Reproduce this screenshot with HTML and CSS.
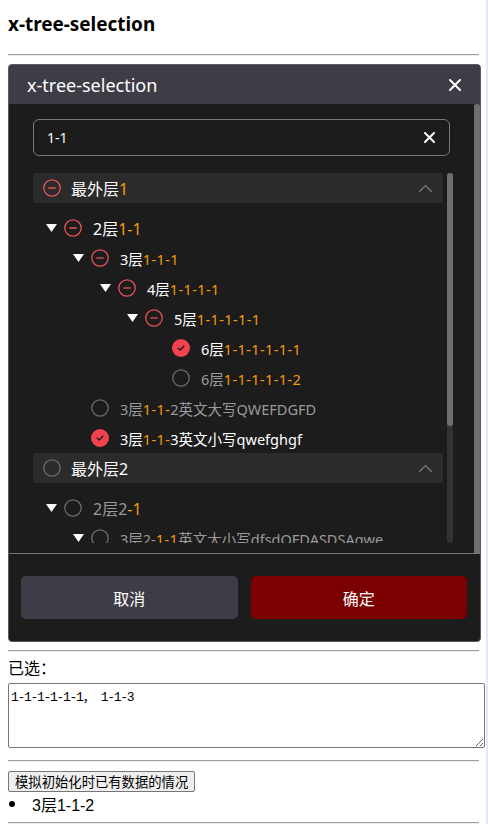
FILE: index.html
```html
<!DOCTYPE html>
<html lang="zh">
<head>
<meta charset="utf-8">
<title>x-tree-selection</title>
<link rel="stylesheet" href="styles.css">
</head>
<body>
<div class="page">
  <h3 class="page-title">x-tree-selection</h3>
  <hr class="rule rule-a">

  <div class="modal">
    <div class="modal-head">
      <span class="modal-title">x-tree-selection</span>
      <svg class="close" width="12" height="12" viewBox="0 0 12 12"><path d="M1 1L11 11M11 1L1 11" stroke="#fff" stroke-width="2" stroke-linecap="round"/></svg>
    </div>
    <div class="modal-body">
      <div class="modal-content">
        <div class="search">
          <span class="search-text">1-1</span>
          <svg class="search-x" width="11" height="11" viewBox="0 0 11 11"><path d="M1 1L10 10M10 1L1 10" stroke="#fff" stroke-width="2" stroke-linecap="round"/></svg>
        </div>
        <div class="tree-wrap">
          <div class="tree">
            <div class="row top">
              <svg class="ico" viewBox="0 0 18 18"><circle cx="9" cy="9" r="8.2" fill="none" stroke="#e5525b" stroke-width="1.3"/><path d="M5.3 9H12.7" stroke="#e5525b" stroke-width="1.3"/></svg>
              <span class="label top-label">最外层<span class="hl">1</span></span>
              <svg class="chev" width="15" height="9" viewBox="0 0 15 9"><path d="M1 8L7.5 1.5L14 8" fill="none" stroke="#707070" stroke-width="1.5"/></svg>
            </div>
            <div class="children">
              <div class="row node d1">
                <svg class="caret" viewBox="0 0 11 8"><path d="M0 0H11L5.5 8Z" fill="#fff"/></svg>
                <svg class="ico" viewBox="0 0 18 18"><circle cx="9" cy="9" r="8.2" fill="none" stroke="#e5525b" stroke-width="1.3"/><path d="M5.3 9H12.7" stroke="#e5525b" stroke-width="1.3"/></svg>
                <span class="label big">2层<span class="hl">1-1</span></span>
              </div>
              <div class="row node d2">
                <svg class="caret" viewBox="0 0 11 8"><path d="M0 0H11L5.5 8Z" fill="#fff"/></svg>
                <svg class="ico" viewBox="0 0 18 18"><circle cx="9" cy="9" r="8.2" fill="none" stroke="#e5525b" stroke-width="1.3"/><path d="M5.3 9H12.7" stroke="#e5525b" stroke-width="1.3"/></svg>
                <span class="label">3层<span class="hl">1-1-1</span></span>
              </div>
              <div class="row node d3">
                <svg class="caret" viewBox="0 0 11 8"><path d="M0 0H11L5.5 8Z" fill="#fff"/></svg>
                <svg class="ico" viewBox="0 0 18 18"><circle cx="9" cy="9" r="8.2" fill="none" stroke="#e5525b" stroke-width="1.3"/><path d="M5.3 9H12.7" stroke="#e5525b" stroke-width="1.3"/></svg>
                <span class="label">4层<span class="hl">1-1-1-1</span></span>
              </div>
              <div class="row node d4">
                <svg class="caret" viewBox="0 0 11 8"><path d="M0 0H11L5.5 8Z" fill="#fff"/></svg>
                <svg class="ico" viewBox="0 0 18 18"><circle cx="9" cy="9" r="8.2" fill="none" stroke="#e5525b" stroke-width="1.3"/><path d="M5.3 9H12.7" stroke="#e5525b" stroke-width="1.3"/></svg>
                <span class="label">5层<span class="hl">1-1-1-1-1</span></span>
              </div>
              <div class="row node d5">
                <svg class="caret hidden" viewBox="0 0 11 8"><path d="M0 0H11L5.5 8Z" fill="#fff"/></svg>
                <svg class="ico" viewBox="0 0 18 18"><circle cx="9" cy="9" r="9" fill="#f0434f"/><path d="M6.2 9.2L8.2 11L11.8 7.2" fill="none" stroke="#1c1c1c" stroke-width="1.4" stroke-linecap="round" stroke-linejoin="round"/></svg>
                <span class="label">6层<span class="hl">1-1-1-1-1-1</span></span>
              </div>
              <div class="row node d5">
                <svg class="caret hidden" viewBox="0 0 11 8"><path d="M0 0H11L5.5 8Z" fill="#fff"/></svg>
                <svg class="ico" viewBox="0 0 18 18"><circle cx="9" cy="9" r="8.2" fill="none" stroke="#6b6b6b" stroke-width="1.3"/></svg>
                <span class="label muted">6层<span class="hl">1-1-1-1-1-2</span></span>
              </div>
              <div class="row node d2">
                <svg class="caret hidden" viewBox="0 0 11 8"><path d="M0 0H11L5.5 8Z" fill="#fff"/></svg>
                <svg class="ico" viewBox="0 0 18 18"><circle cx="9" cy="9" r="8.2" fill="none" stroke="#6b6b6b" stroke-width="1.3"/></svg>
                <span class="label muted">3层<span class="hl">1-1-</span>2英文大写QWEFDGFD</span>
              </div>
              <div class="row node d2">
                <svg class="caret hidden" viewBox="0 0 11 8"><path d="M0 0H11L5.5 8Z" fill="#fff"/></svg>
                <svg class="ico" viewBox="0 0 18 18"><circle cx="9" cy="9" r="9" fill="#f0434f"/><path d="M6.2 9.2L8.2 11L11.8 7.2" fill="none" stroke="#1c1c1c" stroke-width="1.4" stroke-linecap="round" stroke-linejoin="round"/></svg>
                <span class="label">3层<span class="hl">1-1-</span>3英文小写qwefghgf</span>
              </div>
            </div>

            <div class="row top">
              <svg class="ico" viewBox="0 0 18 18"><circle cx="9" cy="9" r="8.2" fill="none" stroke="#6b6b6b" stroke-width="1.3"/></svg>
              <span class="label top-label">最外层2</span>
              <svg class="chev" width="15" height="9" viewBox="0 0 15 9"><path d="M1 8L7.5 1.5L14 8" fill="none" stroke="#707070" stroke-width="1.5"/></svg>
            </div>
            <div class="children">
              <div class="row node d1">
                <svg class="caret" viewBox="0 0 11 8"><path d="M0 0H11L5.5 8Z" fill="#fff"/></svg>
                <svg class="ico" viewBox="0 0 18 18"><circle cx="9" cy="9" r="8.2" fill="none" stroke="#6b6b6b" stroke-width="1.3"/></svg>
                <span class="label big muted">2层2<span class="hl">-1</span></span>
              </div>
              <div class="row node d2">
                <svg class="caret" viewBox="0 0 11 8"><path d="M0 0H11L5.5 8Z" fill="#fff"/></svg>
                <svg class="ico" viewBox="0 0 18 18"><circle cx="9" cy="9" r="8.2" fill="none" stroke="#6b6b6b" stroke-width="1.3"/></svg>
                <span class="label muted">3层2-<span class="hl">1-1</span>英文大小写dfsdQFDASDSAqwe</span>
              </div>
            </div>
          </div>
          <div class="vbar"><div class="vthumb"></div></div>
        </div>
      </div>
      <div class="outer-bar"></div>
    </div>
    <div class="modal-foot">
      <button class="btn btn-cancel">取消</button>
      <button class="btn btn-ok">确定</button>
    </div>
  </div>

  <hr class="rule rule-b">
  <div class="picked-label">已选：</div>
  <textarea class="picked">1-1-1-1-1-1， 1-1-3</textarea>
  <hr class="rule rule-c">
  <button class="sim">模拟初始化时已有数据的情况</button>
  <ul class="list"><li class="list-item"><span class="dot"></span>3层1-1-2</li></ul>
  <hr class="rule rule-d">
</div>
</body>
</html>
```

FILE: styles.css
```css
html {
  background: #fff;
  box-shadow: inset -2px 0 0 #e3e8f4;
}
body {
  margin: 0;
  font-family: "Liberation Sans", "Noto Sans CJK SC", sans-serif;
  color: #000;
}
.page {
  padding: 0 8px;
}
.page-title {
  margin: 12px 0 18px;
  font-family: "Noto Sans", "Noto Sans CJK SC", sans-serif;
  font-size: 18.9px;
  font-weight: bold;
  line-height: 24px;
}
.rule {
  margin: 0;
  height: 0;
  border: 0;
  border-top: 1px solid #a0a0a0;
  border-bottom: 1px solid #ececec;
}
.rule-a { width: 471px; }
.rule-b { width: 471px; margin-top: 8px; }
.rule-c { width: 471px; margin-top: 12px; }
.rule-d { width: 471px; margin-top: 7px; }

/* modal */
.modal {
  margin-top: 8px;
  width: 473px;
  box-sizing: border-box;
  border: 1px solid #5c5c5c;
  border-radius: 4px;
  overflow: hidden;
  background: #1c1c1c;
  font-family: "Noto Sans", "Noto Sans CJK SC", sans-serif;
}
.modal-head {
  height: 39px;
  background: #3e3d46;
  display: flex;
  align-items: center;
  justify-content: space-between;
  padding: 0 19px 0 18px;
}
.modal-title {
  color: #fff;
  font-size: 18px;
  line-height: 24px;
}
.close { display: block; }
.modal-body {
  display: flex;
  height: 449px;
}
.modal-content {
  flex: 1;
  padding: 15px 0 10px 24px;
}
.outer-bar {
  width: 6px;
  background: #6e6e6e;
  border-radius: 2px 2px 0 0;
}
.search {
  width: 417px;
  height: 37px;
  box-sizing: border-box;
  border: 1px solid #7a7a7a;
  border-radius: 6px;
  display: flex;
  align-items: center;
  justify-content: space-between;
  padding: 0 14px 0 13px;
}
.search-text {
  color: #fff;
  font-size: 14px;
}
.search-x { display: block; }
.tree-wrap {
  margin-top: 17px;
  display: flex;
  gap: 4px;
  height: 370px;
}
.tree {
  width: 410px;
  height: 370px;
  overflow: hidden;
}
.vbar {
  width: 6px;
  height: 370px;
  background: #333;
  border-radius: 3px;
}
.vthumb {
  height: 253px;
  background: #6e6e6e;
  border-radius: 3px;
}
.row {
  display: flex;
  align-items: center;
  height: 30px;
  white-space: nowrap;
}
.row.top {
  background: #2b2b2b;
  padding: 0 10px 0 10px;
}
.children {
  padding-top: 10px;
}
.ico {
  width: 18px;
  height: 18px;
  flex: none;
  display: block;
}
.caret {
  width: 11px;
  height: 8px;
  margin-right: 7px;
  flex: none;
  display: block;
}
.caret.hidden { visibility: hidden; }
.label {
  color: #fff;
  font-size: 14.5px;
  margin-left: 11px;
}
.label .hl { letter-spacing: 0.4px; }
.label.big { font-size: 16px; }
.label.big .hl { letter-spacing: 0; }
.top-label {
  flex: 1;
  font-size: 16px;
  margin-left: 10px;
}
.label.muted { color: #9a9a9a; }
.hl { color: #f29b0c; }
.chev { display: block; }
.d1 { padding-left: 13px; }
.d2 { padding-left: 40px; }
.d3 { padding-left: 67px; }
.d4 { padding-left: 94px; }
.d5 { padding-left: 121px; }

.modal-foot {
  border-top: 1px solid #757575;
  display: flex;
  gap: 13px;
  padding: 22px 13px 22px 12px;
}
.btn {
  flex: 1;
  height: 43px;
  border: 0;
  border-radius: 5px;
  color: #fff;
  font-family: "Noto Sans CJK SC", sans-serif;
  font-size: 16px;
}
.btn-cancel { background: #3e3d47; }
.btn-ok { background: #7d0000; }

/* below */
.picked-label {
  margin-top: 6px;
  font-size: 16px;
  line-height: 22px;
}
.picked {
  display: block;
  margin-top: 3px;
  width: 477px;
  height: 65px;
  box-sizing: border-box;
  border: 1px solid #767676;
  border-radius: 2px;
  padding: 2px 2px;
  font-family: "Liberation Mono", "Noto Sans CJK SC", monospace;
  font-size: 13px;
  letter-spacing: -1.3px;
  color: #000;
  resize: both;
}
.sim {
  display: block;
  margin-top: 9px;
  height: 21px;
  padding: 0 6px;
  border: 1px solid #767676;
  border-radius: 2px;
  background: #efefef;
  font-family: "Noto Sans CJK SC", sans-serif;
  font-size: 13.33px;
  line-height: 19px;
  color: #000;
}
.list {
  margin: 0;
  padding: 0;
  list-style: none;
}
.list-item {
  display: flex;
  align-items: center;
  height: 23px;
  font-size: 16px;
}
.dot {
  width: 6px;
  height: 6px;
  border-radius: 50%;
  background: #000;
  margin: 0 17px 0 1px;
}
```
